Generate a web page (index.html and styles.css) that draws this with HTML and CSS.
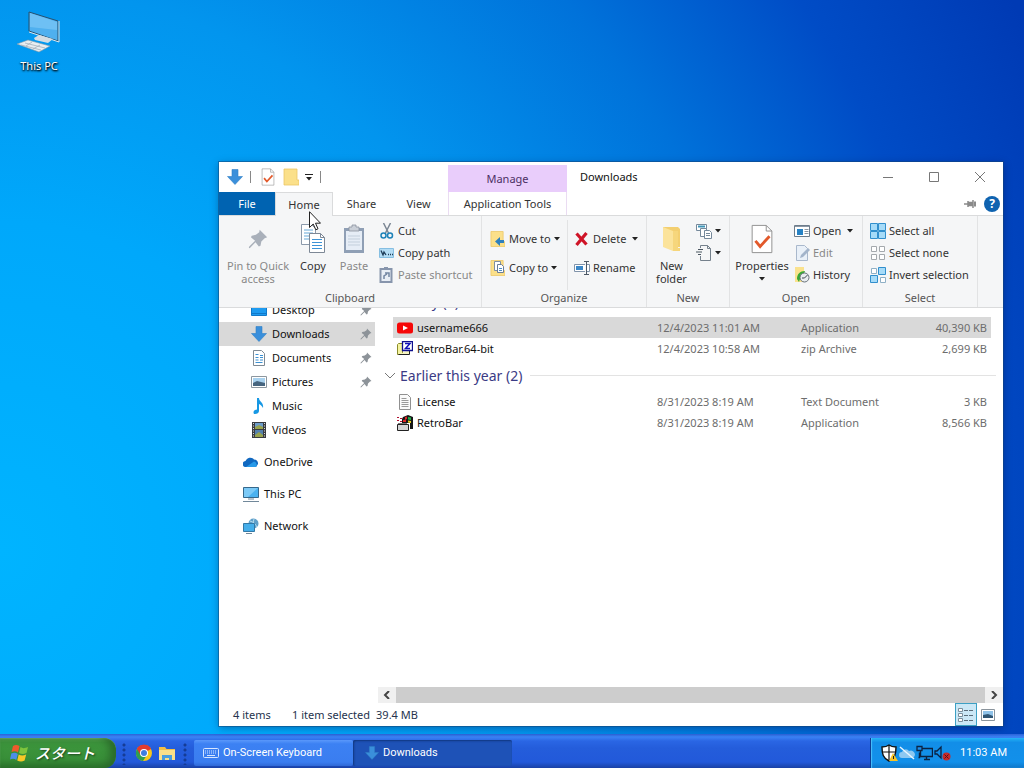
FILE: index.html
```html
<!DOCTYPE html>
<html lang="en">
<head>
    <meta charset="UTF-8">
    <meta name="viewport" content="width=device-width, initial-scale=1">
    <title>Downloads</title>
    <link rel="stylesheet" href="styles.css">
</head>
<body>
<!-- shared icons -->
<svg class="defs" aria-hidden="true">
    <symbol id="i-down" viewBox="0 0 16 16">
        <path d="M5 .5h6v7h4.500L8 15.500.5 7.500H5z" fill="#3a8fdb" stroke="#2f7fc6" stroke-width=".6"/>
    </symbol>
    <symbol id="i-pin" viewBox="0 0 24 24">
        <path d="M14 1l9 9-3 1-4 4-1 5-2 1-4-5-7 7-1-.5.5-1.500 7-7-5-4 1-2 5-1 4-3z"/>
    </symbol>
    <symbol id="i-caret" viewBox="0 0 6 4">
        <path d="M0 0h6L3 3.500z" fill="#222"/>
    </symbol>
    <symbol id="i-folder" viewBox="0 0 16 18">
        <path d="M1 1h13v11h2v5H1z" fill="#fbe08a"/>
        <path d="M1 1h13v11h2v5H1z" fill="none" stroke="#ecc764" stroke-width=".8"/>
    </symbol>
    <symbol id="i-check" viewBox="0 0 24 32">
        <path d="M1.500 1.500h15l6 6v23h-21z" fill="#fff" stroke="#8d8d8d"/>
        <path d="M16.500 1.500v6h6" fill="none" stroke="#8d8d8d"/>
        <path d="M5 18l5 6L20 13" fill="none" stroke="#e2592b" stroke-width="3"/>
    </symbol>
</svg>

<main class="desktop">
    <a class="desktop-icon" href="#">
        <svg width="44" height="42" viewBox="0 0 44 42">
            <path d="M12 1l29 9v20L12 20z" fill="#4fb0ef" stroke="#27506f"/>
            <path d="M13 2l27 9v8L13 16z" fill="#83cbf7" opacity=".6"/>
            <path d="M42 10v21L12 21" fill="none" stroke="#d9e4ea"/>
            <path d="M17 27l5-3 14 4-5 4-13-3z" fill="#d5dde3"/>
            <path d="M0 33l11-4 22 6-11 6z" fill="#e9edf0" stroke="#8298a8" stroke-width=".6"/>
            <path d="M4 34l20 5M8 32l20 5M9 35l6-4M16 38l7-4" stroke="#a5b0ba" stroke-width=".8"/>
        </svg>
        <span>This PC</span>
    </a>

    <section class="window">
        <header class="titlebar">
            <div class="quick-access">
                <svg width="16" height="16"><use href="#i-down"/></svg>
                <i class="sep"></i>
                <svg class="qa-check" width="14" height="18"><use href="#i-check"/></svg>
                <svg class="qa-folder" width="16" height="18"><use href="#i-folder"/></svg>
                <svg class="qa-caret" width="8" height="7" viewBox="0 0 8 7"><path d="M0 .5h8" stroke="#222"/><path d="M1 3h6L4 6.500z" fill="#222"/></svg>
                <i class="sep"></i>
            </div>
            <div class="context-tab">Manage</div>
            <h1 class="window-title">Downloads</h1>
            <div class="window-controls">
                <button aria-label="Minimize"><svg width="12" height="12"><path d="M1 6.500h10"/></svg></button>
                <button aria-label="Maximize"><svg width="12" height="12"><path d="M1.500 1.500h9v9h-9z"/></svg></button>
                <button aria-label="Close"><svg width="12" height="12"><path d="M1 1l10 10M11 1L1 11"/></svg></button>
            </div>
        </header>

        <nav class="tabs">
            <button class="tab tab-file">File</button>
            <button class="tab tab-active">Home</button>
            <button class="tab">Share</button>
            <button class="tab">View</button>
            <button class="tab tab-tools">Application Tools</button>
            <div class="tabs-end">
                <svg width="12" height="8" viewBox="0 0 12 8"><path d="M0 4h4M4 1v6M4 2.500h5v3H4M9 0v8" fill="#8a8a8a" stroke="#8a8a8a" stroke-width="1.500"/><path d="M10 4h2" stroke="#8a8a8a" stroke-width="5"/></svg>
                <button class="help" aria-label="Help">?</button>
            </div>
        </nav>

        <div class="ribbon">
            <div class="group group-clipboard">
                <div class="group-body">
                    <button class="big big-pin" disabled>
                        <svg width="20" height="22" fill="#a9b0ba"><use href="#i-pin"/></svg>
                        <span>Pin to Quick access</span>
                    </button>
                    <button class="big big-copy">
                        <svg width="26" height="30" viewBox="0 0 26 30">
                            <path d="M1.500.5h10l4 4v16h-14z" fill="#fff" stroke="#8c9aab"/>
                            <path d="M4 6h9M4 9h9M4 12h9M4 15h9" stroke="#64a8d8"/>
                            <path d="M9.500 9.500h11l4 4v15h-15z" fill="#fff" stroke="#7d8896"/>
                            <path d="M20.500 9.500v4h4" fill="none" stroke="#7d8896"/>
                            <path d="M12 15.500h10M12 18.500h10M12 21.500h10M12 24.500h10" stroke="#3d93d6"/>
                        </svg>
                        <span>Copy</span>
                    </button>
                    <button class="big big-paste" disabled>
                        <svg width="22" height="30" viewBox="0 0 22 30">
                            <path d="M1 4h20v25H1z" fill="#8f9fb5"/>
                            <path d="M3 7h16v19H3z" fill="#e6edf6"/>
                            <path d="M5 12h12M5 15h12M5 18h12M5 21h12" stroke="#c3cfdc"/>
                            <path d="M6 7V3h3V1h4v2h3v4z" fill="#cbd0d8" stroke="#8b929e" stroke-width=".8"/>
                        </svg>
                        <span>Paste</span>
                    </button>
                    <div class="stack">
                        <button class="small">
                            <svg width="16" height="16" viewBox="0 0 16 16"><path d="M4.500 0l5 10M11.500 0l-5 10" stroke="#7b8794" stroke-width="1.500"/><circle cx="4.500" cy="12.500" r="2.500" fill="none" stroke="#1e82b8" stroke-width="1.500"/><circle cx="11" cy="12.500" r="2.500" fill="none" stroke="#1e82b8" stroke-width="1.500"/></svg>
                            Cut
                        </button>
                        <button class="small">
                            <svg width="16" height="16" viewBox="0 0 16 16"><path d="M.5 3.500h14v9H.5z" fill="#b3dcf4" stroke="#86bfe2"/><path d="M2 5.500l2 4.500 1-3 2 3M9 9.500h1M11 9.500h1M13 9.500h1" fill="none" stroke="#1f3d58" stroke-width="1.300"/></svg>
                            Copy path
                        </button>
                        <button class="small" disabled>
                            <svg width="16" height="16" viewBox="0 0 16 16"><path d="M1.500 2h11v13h-11z" fill="#e8eef6" stroke="#8795ac" stroke-width="2"/><path d="M5 0h4v3H5z" fill="#8795ac"/><path d="M5 12V9l3-2M6 6h4v4" fill="none" stroke="#7286a3" stroke-width="1.500"/></svg>
                            Paste shortcut
                        </button>
                    </div>
                </div>
                <div class="group-name">Clipboard</div>
            </div>

            <div class="group group-organize">
                <div class="group-body">
                    <div class="stack stack-two stack-line">
                        <button class="small">
                            <svg width="16" height="18" viewBox="0 0 16 18"><use href="#i-folder" width="15" height="18"/><path d="M14 10H10V7l-5 4.500L10 16v-3h4z" fill="#2f80bd"/></svg>
                            Move to <svg class="caret"><use href="#i-caret"/></svg>
                        </button>
                        <button class="small">
                            <svg width="16" height="18" viewBox="0 0 16 18"><use href="#i-folder" width="15" height="18"/><path d="M4.500 2.500h6v9h-6z" fill="#fff" stroke="#7e8ea3"/><path d="M7.500 5.500h4l2 2v6h-6z" fill="#fff" stroke="#6a7d97"/><path d="M9 9.500h3M9 11.500h3" stroke="#4a8dc6"/></svg>
                            Copy to <svg class="caret"><use href="#i-caret"/></svg>
                        </button>
                    </div>
                    <div class="stack stack-two">
                        <button class="small">
                            <svg width="16" height="16" viewBox="0 0 16 16"><path d="M2.500 2.500l10 11M12.500 2l-10 12" stroke="#cf1427" stroke-width="3.200"/></svg>
                            Delete <svg class="caret caret-far"><use href="#i-caret"/></svg>
                        </button>
                        <button class="small">
                            <svg width="16" height="16" viewBox="0 0 16 16"><path d="M11 4.500H.5v7H11M13 4.500h2.500v7H13" fill="#fff" stroke="#8093aa"/><path d="M2 6h7v4H2z" fill="#3b87c8"/><path d="M10 1.500h5M10 14.500h5M12.500 1.500v13" stroke="#4c5866"/></svg>
                            Rename
                        </button>
                    </div>
                </div>
                <div class="group-name">Organize</div>
            </div>

            <div class="group group-new">
                <div class="group-body">
                    <button class="big big-folder">
                        <svg width="20" height="28" viewBox="0 0 20 28"><path d="M1 2h15l2 2v18H1z" fill="#f3cf70"/><path d="M1 2l10 4v20L1 22z" fill="#fbe39b"/><path d="M11 6h5v17h2v3h-7z" fill="#f6d67c"/></svg>
                        <span>New folder</span>
                    </button>
                    <div class="stack">
                        <button class="small" aria-label="New item">
                            <svg width="16" height="16" viewBox="0 0 16 16"><path d="M.5 1.500h10v6H.5z" fill="#fff" stroke="#75899b"/><path d="M2 3.500h7" stroke="#3f94b7" stroke-width="2"/><path d="M4.500 5.500h6v8h-6z" fill="#fff" stroke="#75899b"/><path d="M8.500 7.500h5l2 2v6h-7z" fill="#fff" stroke="#75899b"/><path d="M10 10.500h4M10 12.500h4" stroke="#75899b"/></svg>
                            <svg class="caret"><use href="#i-caret"/></svg>
                        </button>
                        <button class="small" aria-label="Easy access">
                            <svg width="16" height="16" viewBox="0 0 16 16"><path d="M4.500 3V.5h7l3 3v12h-10V11M11.500.5v3h3" fill="none" stroke="#75818c"/><path d="M2 4.500h5M0 7h6M2 9.500h3" stroke="#4b5661" stroke-width="1.200"/></svg>
                            <svg class="caret"><use href="#i-caret"/></svg>
                        </button>
                    </div>
                </div>
                <div class="group-name">New</div>
            </div>

            <div class="group group-open">
                <div class="group-body">
                    <button class="big big-props">
                        <svg width="24" height="30"><use href="#i-check"/></svg>
                        <span>Properties</span>
                        <svg class="caret"><use href="#i-caret"/></svg>
                    </button>
                    <div class="stack">
                        <button class="small">
                            <svg width="16" height="16" viewBox="0 0 16 16"><path d="M.5 2.500h15v11H.5z" fill="#fff" stroke="#6d7c8b"/><path d="M1 3.500h14" stroke="#8a97a4"/><path d="M3 6h6v6H3z" fill="#2782c4"/><path d="M10.500 6.500h4M10.500 8.500h4M10.500 10.500h4" stroke="#8a97a4"/></svg>
                            Open <svg class="caret caret-far"><use href="#i-caret"/></svg>
                        </button>
                        <button class="small" disabled>
                            <svg width="16" height="16" viewBox="0 0 16 16"><path d="M2.500.5h8l3 3v12h-11z" fill="#e9f0f8" stroke="#a9b8cc"/><path d="M6 13l1-3 7-7 2 2-7 7z" fill="#a3b4ca"/></svg>
                            Edit
                        </button>
                        <button class="small">
                            <svg width="16" height="16" viewBox="0 0 16 16"><path d="M1 0h9v15H1z" fill="#fae28e"/><path d="M3 12c0-5 3-8 8-8l-1 3c-3 0-4 2-4 5l-1 3z" fill="#39a935"/><circle cx="10.500" cy="10.500" r="4.500" fill="#e9edf0" stroke="#68727c"/><path d="M10.500 11l3-3M10.500 11H8" stroke="#3e464e"/></svg>
                            History
                        </button>
                    </div>
                </div>
                <div class="group-name">Open</div>
            </div>

            <div class="group group-select">
                <div class="group-body">
                    <div class="stack">
                        <button class="small">
                            <svg width="16" height="16" viewBox="0 0 16 16"><path d="M.5.5h7v7h-7zM8.500.5h7v7h-7zM.5 8.500h7v7h-7zM8.500 8.500h7v7h-7z" fill="#a6dbf8" stroke="#318fcd"/></svg>
                            Select all
                        </button>
                        <button class="small">
                            <svg width="16" height="16" viewBox="0 0 16 16"><path d="M1.500 1.500h5v5h-5zM9.500 1.500h5v5h-5zM1.500 9.500h5v5h-5zM9.500 9.500h5v5h-5z" fill="#fff" stroke="#a4a9ad"/></svg>
                            Select none
                        </button>
                        <button class="small">
                            <svg width="16" height="16" viewBox="0 0 16 16"><path d="M1.500 1.500h5v5h-5zM10.500 10.500h5v5h-5z" fill="#fff" stroke="#8fb0c6"/><path d="M8.500.5h7v7h-7zM.5 8.500h7v7h-7z" fill="#a6dbf8" stroke="#318fcd"/></svg>
                            Invert selection
                        </button>
                    </div>
                </div>
                <div class="group-name">Select</div>
            </div>
        </div>

        <div class="content">
            <nav class="tree">
                <a class="node child" href="#">
                    <svg width="16" height="16" viewBox="0 0 16 16"><path d="M.5 1.500h15v12H.5z" fill="#1e9bf0" stroke="#1179c9"/><path d="M1 11.500h14" stroke="#1179c9"/></svg>
                    Desktop <svg class="pin"><use href="#i-pin"/></svg>
                </a>
                <a class="node child selected" href="#">
                    <svg width="16" height="16"><use href="#i-down"/></svg>
                    Downloads <svg class="pin"><use href="#i-pin"/></svg>
                </a>
                <a class="node child" href="#">
                    <svg width="16" height="16" viewBox="0 0 16 16"><path d="M2.500.5h8l3 3v12h-11z" fill="#fff" stroke="#7f8a94"/><path d="M4.500 4.500h3M4.500 7.500h3M9 7.500h3M4.500 10h3M4.500 12.500h7M9 5.500h3M9 10h3" stroke="#3d91d2"/></svg>
                    Documents <svg class="pin"><use href="#i-pin"/></svg>
                </a>
                <a class="node child" href="#">
                    <svg width="16" height="16" viewBox="0 0 16 16"><path d="M.5 2.500h15v11H.5z" fill="#fff" stroke="#8d979f"/><path d="M2 4h12v8H2z" fill="#a9d2ef"/><path d="M2 9l4-2 4 1 4 1v3H2z" fill="#47657f"/></svg>
                    Pictures <svg class="pin"><use href="#i-pin"/></svg>
                </a>
                <a class="node child" href="#">
                    <svg width="16" height="16" viewBox="0 0 16 16"><path d="M6 0h2c0 4 5 4 4 10-1-2-2-3-4-4v7c0 2-2 3-4 3s-2-3 0-4l2-.5z" fill="#1798e4"/></svg>
                    Music
                </a>
                <a class="node child" href="#">
                    <svg width="16" height="16" viewBox="0 0 16 16"><path d="M1 0h14v16H1z" fill="#383b40"/><path d="M4 1h8v6H4z" fill="#6c9cc9"/><path d="M4 8h8v7H4z" fill="#5480ad"/><path d="M4 5l4-2 4 2v2H4zM4 13l4-3 4 3v2H4z" fill="#98a34c"/><path d="M2.500 1v14M13.500 1v14" stroke="#dcdcdc" stroke-dasharray="1 1.500"/></svg>
                    Videos
                </a>
                <a class="node root" href="#">
                    <svg width="16" height="16" viewBox="0 0 16 16"><path d="M3 13a3 3 0 0 1-.5-6A5 5 0 0 1 11 5.500 4 4 0 0 1 15 10l-2 3z" fill="#1068c0"/><path d="M3 13l8-5.500A3.500 3.500 0 0 1 13 13z" fill="#2799e8"/></svg>
                    OneDrive
                </a>
                <a class="node root" href="#">
                    <svg width="16" height="16" viewBox="0 0 16 16"><path d="M.5 1.500h15v10H.5z" fill="#4bb2f0" stroke="#35688c"/><path d="M1 2h14L5 11H1z" fill="#7ccaf7"/><path d="M5 13h6M0 15.500h16" stroke="#71889a"/></svg>
                    This PC
                </a>
                <a class="node root" href="#">
                    <svg width="16" height="16" viewBox="0 0 16 16"><circle cx="10.500" cy="5.500" r="5" fill="#5f9fc9"/><path d="M7 3c4 1 6 4 7 6M11 1c-1 3-1 5 0 8" fill="none" stroke="#b4dbee"/><path d="M.5 5.500h11v8H.5z" fill="#45aeea" stroke="#3278a6"/><path d="M3 15.500h6" stroke="#71889a"/></svg>
                    Network
                </a>
            </nav>

            <div class="pane">
                <div class="files">
                    <h2 class="heading heading-top"><svg class="chevron"><path d="M1 1l5 5 5-5"/></svg>Today (2)</h2>
                    <table class="list">
                        <tr class="row-selected">
                            <td class="name"><span>
                                <svg width="16" height="16" viewBox="0 0 16 16"><rect y="2.500" width="16" height="11" rx="2.500" fill="#f60707"/><path d="M6 5.500v5L11 8z" fill="#fff"/></svg>
                                username666</span></td>
                            <td class="date">12/4/2023 11:01 AM</td>
                            <td class="type">Application</td>
                            <td class="size">40,390 KB</td>
                        </tr>
                        <tr>
                            <td class="name"><span>
                                <svg width="16" height="16" viewBox="0 0 16 16"><path d="M.5 3.500l1-1h4v11h-5z" fill="#f5f3a0" stroke="#8a8c2c"/><path d="M1.500 13.500h11V9" fill="#f7f5c0" stroke="#222"/><path d="M5.500.500h10v9h-10z" fill="#fff" stroke="#10108c" stroke-width="1.300"/><path d="M8 2.500h5l-4.500 5H13" fill="none" stroke="#1212b8" stroke-width="1.500"/></svg>
                                RetroBar.64-bit</span></td>
                            <td class="date">12/4/2023 10:58 AM</td>
                            <td class="type">zip Archive</td>
                            <td class="size">2,699 KB</td>
                        </tr>
                    </table>
                    <h2 class="heading"><svg class="chevron"><path d="M1 1l5 5 5-5"/></svg>Earlier this year (2)</h2>
                    <table class="list">
                        <tr>
                            <td class="name"><span>
                                <svg width="16" height="16" viewBox="0 0 16 16"><path d="M2.500.5h8l3 3v12h-11z" fill="#fafafa" stroke="#909090"/><path d="M4.500 4.500h5M4.500 6.500h7M4.500 8.500h7M4.500 10.500h7M4.500 12.500h7" stroke="#9a9a9a"/></svg>
                                License</span></td>
                            <td class="date">8/31/2023 8:19 AM</td>
                            <td class="type">Text Document</td>
                            <td class="size">3 KB</td>
                        </tr>
                        <tr>
                            <td class="name"><span>
                                <svg width="16" height="16" viewBox="0 0 16 16"><path d="M0 2h2v1H0zM3 3h2v1H3zM0 5h2v1H0zM3 6h2v1H3z" fill="#b01030"/><path d="M6 2l5-2 5 2v12h-3V8H5V4z" fill="#161616"/><path d="M8 2l2-.5V4L8 4.500zM6 5l3-.5V7H6z" fill="#e02525"/><path d="M11 2l3 .5V5l-3-.5z" fill="#22b04c"/><path d="M11 5.500l3 .5v2l-3-.5z" fill="#e6d21c"/><path d="M.5 9.500h11v6H.5z" fill="#d4d4d4" stroke="#222"/><path d="M1 8.500h9" stroke="#777"/></svg>
                                RetroBar</span></td>
                            <td class="date">8/31/2023 8:19 AM</td>
                            <td class="type">Application</td>
                            <td class="size">8,566 KB</td>
                        </tr>
                    </table>
                </div>
                <div class="scrollbar">
                    <button aria-label="Scroll left"><svg width="8" height="8"><path d="M6 0L2 4l4 4"/></svg></button>
                    <div class="thumb"></div>
                    <button aria-label="Scroll right"><svg width="8" height="8"><path d="M2 0l4 4-4 4"/></svg></button>
                </div>
            </div>
        </div>

        <footer class="status">
            <span class="count">4 items</span>
            <span class="chosen">1 item selected</span>
            <span>39.4 MB</span>
            <div class="view-buttons">
                <button class="view-on" aria-label="Details"><svg width="16" height="14" viewBox="0 0 16 14"><path d="M.5.5h4v3h-4zM.5 5.500h4v3h-4zM.5 10.500h4v3h-4z" fill="#fff" stroke="#7b8f9c"/><path d="M6 2.500h10M6 7.500h10M6 12.500h10" stroke="#5b6d7a" stroke-dasharray="4 1"/></svg></button>
                <button aria-label="Large icons"><svg width="14" height="12" viewBox="0 0 14 12"><path d="M.5.5h13v11H.5z" fill="#fff" stroke="#8a949c"/><path d="M2 2h10v7H2z" fill="#8fc2e8"/><path d="M2 6l5-1 5 2v2H2z" fill="#2f5573"/></svg></button>
            </div>
        </footer>
    </section>

    <svg class="cursor" width="12" height="20" viewBox="0 0 12 20"><path d="M.5.700v15.800l3.700-3.500 2.600 5.800 2.200-1-2.500-5.600h5z" fill="#fff" stroke="#222"/></svg>
</main>

<footer class="taskbar">
    <button class="start">
        <svg width="20" height="20" viewBox="0 0 20 20">
            <path d="M3 3c2-1.500 4-1.500 6.500 0L8 9.500C6 8 4 8 1.500 9z" fill="#ee5a2c"/>
            <path d="M10.500 4c2 1.500 4 1.500 7.500 0l-1.500 6c-3 1.500-5 1.200-7.500 0z" fill="#7ec43d"/>
            <path d="M1.300 10.500c2.500-1 4.500-1 6.500.5l-1.500 6c-2-1.500-4-1.500-6.300-.5z" fill="#4d8ee8"/>
            <path d="M8.700 11.500c2.500 1.200 4.500 1.200 7.500 0l-1.600 6c-3 1.500-5 1-7.400 0z" fill="#f8c827"/>
        </svg>
        <span>スタート</span>
    </button>
    <i class="grip"></i>
    <div class="quick-launch">
        <svg width="18" height="18" viewBox="0 0 18 18">
            <circle cx="9" cy="9" r="8" fill="#f7c61b"/>
            <path d="M9 9L2 5a8 8 0 0 1 14 0z" fill="#e33b2e"/>
            <path d="M9 9L2 5a8 8 0 0 0 6 12l4-6z" fill="#2f9e4f"/>
            <path d="M9 5h7a8 8 0 0 0-14 0l3.500 6z" fill="#e33b2e"/>
            <circle cx="9" cy="9" r="4" fill="#fff"/><circle cx="9" cy="9" r="3" fill="#3f7de0"/>
        </svg>
        <svg width="18" height="18" viewBox="0 0 18 18"><path d="M1 3h6l1.500 2H17v11H1z" fill="#f4bf45"/><path d="M1 6h16v10H1z" fill="#fbe08a"/><path d="M4 16v-5h10v5h-3v-2H7v2z" fill="#4b9fdf"/></svg>
    </div>
    <i class="grip"></i>
    <button class="task">
        <svg width="16" height="16" viewBox="0 0 16 16"><rect x=".5" y="3.500" width="15" height="9" rx="1" fill="none" stroke="#d7e6ff"/><path d="M2 6h12M2 8h12" stroke="#d7e6ff" stroke-dasharray="1 1"/><path d="M4 10.500h8" stroke="#d7e6ff"/></svg>
        On-Screen Keyboard
    </button>
    <button class="task task-active">
        <svg width="14" height="16"><use href="#i-down"/></svg>
        Downloads
    </button>
    <div class="tray">
        <svg width="17" height="18" viewBox="0 0 17 18"><path d="M8 1c2 1.500 4 2 7 2 0 7-1 11-7 14C2 14 1 10 1 3c3 0 5-.5 7-2z" fill="#fff" stroke="#111" stroke-width="1.400"/><path d="M8 1v16M1 8h14" stroke="#111" stroke-width="1.200"/><path d="M12 9l5 8H8z" fill="#f7c325"/><path d="M12.500 12v3" stroke="#222"/></svg>
        <svg width="16" height="14" viewBox="0 0 16 14"><path d="M3 12a3 3 0 0 1 0-6 4 4 0 0 1 7-1 4 4 0 0 1 5 6l-1 1z" fill="#8dc8f1"/><path d="M1 1l14 12" stroke="#e9f6ff" stroke-width="1.500"/></svg>
        <svg width="17" height="16" viewBox="0 0 17 16"><path d="M4.500 3.500h12v8h-12zM8 14.500h6M10.500 12v2M3.500 7.500v5h-1" fill="none" stroke="#0b2242" stroke-width="1.400"/><path d="M1 1.500h5v4H1z" fill="#1d8eea" stroke="#0b2242" stroke-width="1.300"/></svg>
        <svg width="17" height="16" viewBox="0 0 17 16"><path d="M1 6h2l4-4v11l-4-4H1z" fill="none" stroke="#0b2242" stroke-width="1.300"/><circle cx="12.500" cy="11.500" r="4" fill="#c52a2a"/><path d="M10.500 9.500l4 4M14.500 9.500l-4 4" stroke="#5d0f17"/></svg>
        <time>11:03 AM</time>
    </div>
</footer>
</body>
</html>
```
FILE: styles.css
```css
* {
    box-sizing: border-box;
}

body {
    margin: 0;
    height: 100vh;
    display: flex;
    flex-direction: column;
    overflow: hidden;
    font: 11px/16px "Noto Sans", "Noto Sans CJK JP", sans-serif;
    color: #111;
}

button {
    font: inherit;
    color: inherit;
    border: 0;
    padding: 0;
    background: none;
}

a {
    color: inherit;
    text-decoration: none;
}

svg {
    flex: none;
}

.defs {
    position: absolute;
    width: 0;
    height: 0;
}

.caret {
    width: 6px;
    height: 4px;
}

/* desktop */
.desktop {
    flex: 1;
    position: relative;
    background: radial-gradient(ellipse 112% 160% at 0% 75%, #00b4ff 0%, #00a8fb 28%, #0295ee 48%, #0072da 68%, #004cc6 84%, #003ab4 100%);
}

.desktop-icon {
    position: absolute;
    top: 11px;
    left: 0;
    width: 78px;
    display: flex;
    flex-direction: column;
    align-items: center;
    gap: 5px;
    color: #fff;
    text-shadow: 1px 1px 2px #000, 0 1px 2px #000;
}

.window {
    position: absolute;
    top: 162px;
    right: 21px;
    bottom: 8px;
    left: 219px;
    display: flex;
    flex-direction: column;
    background: #fff;
    box-shadow: 0 0 0 1px rgba(20, 70, 120, .5), 0 2px 8px rgba(0, 0, 50, .35);
}

.cursor {
    position: absolute;
    top: 211px;
    left: 309px;
}

/* title bar */
.titlebar {
    display: flex;
    height: 30px;
}

.quick-access {
    width: 229px;
    padding-left: 8px;
    display: flex;
    align-items: center;
}

.quick-access .sep {
    width: 1px;
    height: 12px;
    margin: 0 10px 0 7px;
    background: #888;
}

.qa-folder {
    margin: 0 6px 0 8px;
}

.context-tab {
    width: 119px;
    margin-top: 3px;
    line-height: 28px;
    text-align: center;
    background: #e9cdfb;
    color: #4c2f63;
}

.window-title {
    margin: 0 0 0 13px;
    font-size: 11px;
    font-weight: normal;
    line-height: 30px;
}

.window-controls {
    margin-left: auto;
    display: flex;
}

.window-controls button {
    width: 46px;
    display: flex;
    align-items: center;
    justify-content: center;
}

.window-controls path {
    fill: none;
    stroke: #777;
}

/* tabs */
.tabs {
    display: flex;
    height: 24px;
    border-bottom: 1px solid #dadbdc;
}

.tab {
    width: 57px;
    color: #333;
}

.tab-file {
    width: 56px;
    background: #0063b1;
    color: #fff;
}

.tab-active {
    width: 58px;
    height: 24px;
    border: 1px solid #dadbdc;
    border-bottom: 0;
    background: #f5f6f7;
}

.tab-tools {
    width: 119px;
    margin-left: 1px;
    border: solid #eadcf2;
    border-width: 0 1px;
}

.tabs-end {
    margin-left: auto;
    padding-right: 3px;
    display: flex;
    align-items: center;
    gap: 8px;
}

.help {
    width: 16px;
    height: 16px;
    border-radius: 8px;
    background: #0f63b0;
    color: #fff;
    font-size: 12px;
    font-weight: bold;
}

/* ribbon */
.ribbon {
    display: flex;
    height: 92px;
    background: #f5f6f7;
    border-bottom: 1px solid #dadbdc;
    color: #333;
    overflow: hidden;
}

.group {
    flex: none;
    display: flex;
    flex-direction: column;
    border-right: 1px solid #e2e3e4;
}

.group-clipboard {
    width: 263px;
}

.group-organize {
    width: 165px;
}

.group-new {
    width: 83px;
}

.group-open {
    width: 133px;
}

.group-select {
    width: 115px;
}

.group-body {
    height: 74px;
    padding-top: 4px;
    display: flex;
}

.group-name {
    line-height: 16px;
    text-align: center;
    color: #555;
}

.big {
    display: flex;
    flex-direction: column;
    align-items: center;
    line-height: 13px;
}

.big > svg:first-child {
    height: 30px;
    margin: 4px 0 5px;
}

.big-pin {
    width: 78px;
    padding: 0 7px;
}

.big-copy {
    width: 32px;
}

.big-paste {
    width: 50px;
}

.big-folder {
    width: 49px;
    padding: 0 7px;
}

.big-props {
    width: 64px;
}

.big .caret {
    margin-top: 5px;
}

.big:disabled,
.small:disabled {
    color: #888;
}

.small {
    height: 22px;
    display: flex;
    align-items: center;
    gap: 3px;
    white-space: nowrap;
}

.caret-far {
    margin-left: 3px;
}

.stack-two {
    padding: 4px 0 0 6px;
}

.stack-two .small {
    height: 29px;
}

.group-organize .stack {
    padding-left: 6px;
}

.stack-line {
    width: 86px;
    border-right: 1px solid #e2e3e4;
}

.group-organize .stack-line {
    padding-left: 8px;
}

.group-select .stack {
    padding-left: 7px;
}

/* tree and files */
.content {
    flex: 1;
    min-height: 0;
    display: flex;
    overflow: hidden;
}

.tree {
    width: 159px;
    margin-top: -10px;
    padding-right: 3px;
}

.node {
    height: 24px;
    display: flex;
    align-items: center;
    gap: 5px;
}

.child {
    padding-left: 32px;
}

.root {
    margin-top: 8px;
    padding-left: 24px;
}

.selected {
    background: #d9d9d9;
}

.pin {
    width: 12px;
    height: 12px;
    margin: 0 3px 0 auto;
    fill: #8d9399;
}

.pane {
    flex: 1;
    min-width: 0;
    display: flex;
    flex-direction: column;
}

.files {
    flex: 1;
    padding: 0 7px 0 6px;
}

.heading {
    margin: 0;
    height: 32px;
    padding-top: 1px;
    display: flex;
    align-items: center;
    font-size: 14px;
    font-weight: normal;
    color: #3b3b85;
}

.heading-top {
    margin-top: -23px;
}

.heading::after {
    content: "";
    flex: 1;
    height: 1px;
    margin-left: 8px;
    background: #e3e3e3;
}

.chevron {
    width: 12px;
    height: 8px;
    margin-right: 4px;
    fill: none;
    stroke: #777;
}

.list {
    width: calc(100% - 14px);
    margin-left: 9px;
    border-collapse: collapse;
    table-layout: fixed;
}

.list td {
    height: 21px;
    padding: 0;
    white-space: nowrap;
    color: #6d6d6d;
}

.list .name {
    color: #111;
    padding-left: 4px;
}

.name span {
    display: flex;
    align-items: center;
    gap: 4px;
}

.list .date {
    width: 144px;
}

.list .type {
    width: 96px;
}

.list .size {
    width: 94px;
    padding-right: 4px;
    text-align: right;
}

.row-selected {
    background: #d9d9d9;
}

.scrollbar {
    height: 16px;
    display: flex;
    background: #f0f0f0;
}

.scrollbar button {
    width: 18px;
    display: flex;
    align-items: center;
    justify-content: center;
}

.scrollbar path {
    fill: none;
    stroke: #444;
    stroke-width: 2;
}

.thumb {
    flex: 1;
    background: #cdcdcd;
}

/* status bar */
.status {
    height: 23px;
    padding-left: 14px;
    display: flex;
    align-items: center;
    color: #26334d;
}

.count {
    width: 59px;
}

.chosen {
    margin-right: 6px;
}

.view-buttons {
    margin-left: auto;
    padding-right: 4px;
    display: flex;
}

.view-buttons button {
    width: 22px;
    height: 23px;
    display: flex;
    align-items: center;
    justify-content: center;
}

.view-buttons .view-on {
    border: 1px solid #3da0c4;
    background: #cbe8f6;
}

/* taskbar */
.taskbar {
    height: 34px;
    padding-top: 4px;
    display: flex;
    background: linear-gradient(#2b62d8 0, #3b83f5 3px, #2a66e4 7px, #245ddb 14px, #2259da 28px, #1941a5 34px);
    color: #fff;
    font-family: Roboto, "Noto Sans CJK JP", sans-serif;
}

.start {
    width: 116px;
    padding-left: 10px;
    display: flex;
    align-items: center;
    gap: 5px;
    border-radius: 0 12px 12px 0;
    background: linear-gradient(#5eac56, #3d963d 15%, #388e38 70%, #2c762c);
    box-shadow: inset -6px 0 8px #2a6a2a, inset 0 1px 1px #86c380;
}

.start span {
    font: italic 500 15px/26px "Noto Sans CJK JP", sans-serif;
    text-shadow: 1px 1px 2px #1a401a;
}

.grip {
    width: 5px;
    height: 22px;
    margin: 5px 6px 0;
    background: radial-gradient(circle at 2px 2px, #153c96 1px, transparent 2px) 0 0 / 5px 5px;
}

.quick-launch {
    width: 44px;
    display: flex;
    align-items: center;
    justify-content: center;
    gap: 5px;
}

.task {
    flex: 0 1 159px;
    height: 26px;
    margin: 2px 0 0;
    padding-left: 9px;
    display: flex;
    align-items: center;
    gap: 4px;
    border-radius: 2px;
    background: linear-gradient(#5a98fb, #3c81f3 15%, #3a7df0 85%, #2f68d6);
    white-space: nowrap;
}

.task-active {
    padding-left: 12px;
    background: #1e52b7;
    box-shadow: inset 1px 1px 2px #10367d;
}

.tray {
    margin-left: auto;
    padding: 0 17px 0 10px;
    display: flex;
    align-items: center;
    gap: 1px;
    border-left: 1px solid #0c3c94;
    background: linear-gradient(#22b2f5, #128ee8 15%, #1290ea 80%, #0f76c8);
    box-shadow: inset 1px 0 1px #4cc0fb;
}

.tray time {
    margin-left: 8px;
}
```
